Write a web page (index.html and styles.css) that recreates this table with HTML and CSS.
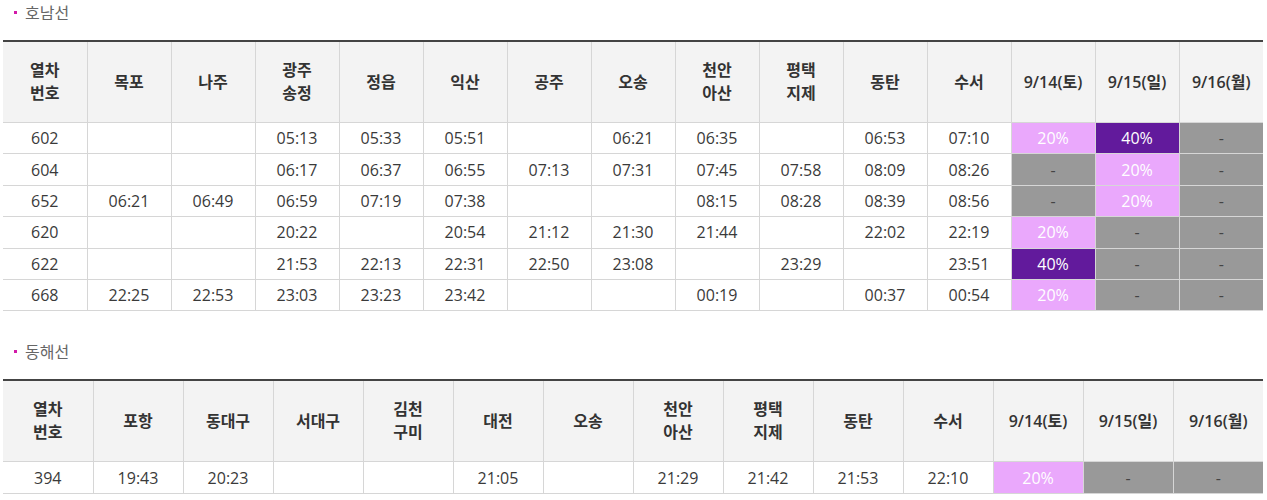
FILE: index.html
```html
<!DOCTYPE html>
<html lang="ko">
<head>
<meta charset="utf-8">
<title>시간표</title>
<link rel="stylesheet" href="styles.css">
</head>
<body>
<section class="line">
  <h3 class="line-title"><span class="dot"></span>호남선</h3>
  <table class="tt tt-15">
    <thead>
      <tr>
        <th>열차<br>번호</th><th>목포</th><th>나주</th><th>광주<br>송정</th><th>정읍</th><th>익산</th><th>공주</th><th>오송</th><th>천안<br>아산</th><th>평택<br>지제</th><th>동탄</th><th>수서</th><th>9/14(토)</th><th>9/15(일)</th><th>9/16(월)</th>
      </tr>
    </thead>
    <tbody>
      <tr><td>602</td><td></td><td></td><td>05:13</td><td>05:33</td><td>05:51</td><td></td><td>06:21</td><td>06:35</td><td></td><td>06:53</td><td>07:10</td><td class="d20">20%</td><td class="d40">40%</td><td class="dno">-</td></tr>
      <tr><td>604</td><td></td><td></td><td>06:17</td><td>06:37</td><td>06:55</td><td>07:13</td><td>07:31</td><td>07:45</td><td>07:58</td><td>08:09</td><td>08:26</td><td class="dno">-</td><td class="d20">20%</td><td class="dno">-</td></tr>
      <tr><td>652</td><td>06:21</td><td>06:49</td><td>06:59</td><td>07:19</td><td>07:38</td><td></td><td></td><td>08:15</td><td>08:28</td><td>08:39</td><td>08:56</td><td class="dno">-</td><td class="d20">20%</td><td class="dno">-</td></tr>
      <tr><td>620</td><td></td><td></td><td>20:22</td><td></td><td>20:54</td><td>21:12</td><td>21:30</td><td>21:44</td><td></td><td>22:02</td><td>22:19</td><td class="d20">20%</td><td class="dno">-</td><td class="dno">-</td></tr>
      <tr><td>622</td><td></td><td></td><td>21:53</td><td>22:13</td><td>22:31</td><td>22:50</td><td>23:08</td><td></td><td>23:29</td><td></td><td>23:51</td><td class="d40">40%</td><td class="dno">-</td><td class="dno">-</td></tr>
      <tr><td>668</td><td>22:25</td><td>22:53</td><td>23:03</td><td>23:23</td><td>23:42</td><td></td><td></td><td>00:19</td><td></td><td>00:37</td><td>00:54</td><td class="d20">20%</td><td class="dno">-</td><td class="dno">-</td></tr>
    </tbody>
  </table>
</section>
<section class="line line-next">
  <h3 class="line-title"><span class="dot"></span>동해선</h3>
  <table class="tt tt-14">
    <thead>
      <tr>
        <th>열차<br>번호</th><th>포항</th><th>동대구</th><th>서대구</th><th>김천<br>구미</th><th>대전</th><th>오송</th><th>천안<br>아산</th><th>평택<br>지제</th><th>동탄</th><th>수서</th><th>9/14(토)</th><th>9/15(일)</th><th>9/16(월)</th>
      </tr>
    </thead>
    <tbody>
      <tr><td>394</td><td>19:43</td><td>20:23</td><td></td><td></td><td>21:05</td><td></td><td>21:29</td><td>21:42</td><td>21:53</td><td>22:10</td><td class="d20">20%</td><td class="dno">-</td><td class="dno">-</td></tr>
    </tbody>
  </table>
</section>
</body>
</html>
```

FILE: styles.css
```css
html, body {
  margin: 0;
  padding: 0;
  background: #fff;
}
body {
  padding: 0 4px 0 3px;
  font-family: "Open Sans", "Noto Sans CJK KR", sans-serif;
  color: #333;
}
.line-title {
  display: flex;
  align-items: center;
  margin: 0 0 16px 0;
  height: 24px;
  font-size: 16px;
  font-weight: normal;
  color: #666;
  font-family: "Noto Sans CJK KR", sans-serif;
}
.dot {
  width: 3px;
  height: 3px;
  background: #d21aa9;
  margin: 0 8px 0 11px;
}
.line-next {
  margin-top: 28px;
}
.tt {
  width: 1260px;
  border-collapse: collapse;
  table-layout: fixed;
  border-top: 2px solid #444;
  font-size: 16px;
}
.tt th {
  height: 80px;
  padding: 0;
  background: #f3f3f3;
  font-weight: 600;
  font-size: 16px;
  line-height: 23px;
  color: #333;
  border: 1px solid #d6d6d6;
  border-top: none;
  text-align: center;
  vertical-align: middle;
}
.tt td {
  height: 30.4px;
  padding: 0;
  text-align: center;
  border: 1px solid #d6d6d6;
  color: #3a3a3a;
  line-height: 20px;
}
.tt tr > :first-child {
  border-left: none;
}
.tt tr > :last-child {
  border-right: none;
}
.tt .d20 {
  background: #eaa8fc;
  color: #fff;
}
.tt .d40 {
  background: #621a9c;
  color: #fff;
}
.tt .dno {
  background: #999999;
  color: #444;
}
```
